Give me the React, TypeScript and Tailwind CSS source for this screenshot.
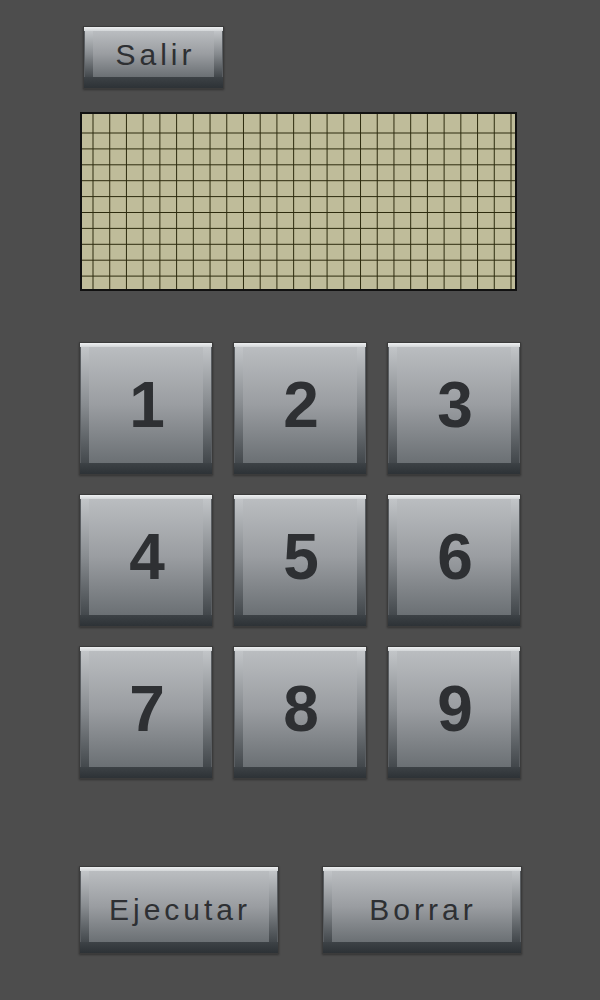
import React from 'react';

const font = { fontFamily: '"Liberation Sans", Arial, sans-serif' };

type BtnProps = {
  label: string;
  className: string;
  textClass: string;
};

// bevelled grey key: light strip on top, darker side bevels, dark strip at the bottom
const BevelButton = ({ label, className, textClass }: BtnProps) => {
  return (
    <button
      className={`flex flex-col border border-[#3b3b3b] shadow-[0_1px_2px_rgba(0,0,0,0.35)] ${className}`}
      style={font}
    >
      <div className="h-[4px] w-full shrink-0 bg-gradient-to-b from-[#eef0f1] to-[#d2d5d7]" />
      <div className="flex flex-1 w-full">
        <div className="w-[9px] shrink-0 bg-gradient-to-b from-[#c2c5c8] via-[#888c90] to-[#44494d] border-l border-[#5a5e62]" />
        <div
          className={`flex flex-1 items-center justify-center bg-gradient-to-b from-[#babdc0] via-[#9a9da1] to-[#6b7074] text-[#2e3033] ${textClass}`}
        >
          {label}
        </div>
        <div className="w-[9px] shrink-0 bg-gradient-to-b from-[#c2c5c8] via-[#868a8e] to-[#42474b] border-r border-[#5a5e62]" />
      </div>
      <div className="h-[11px] w-full shrink-0 bg-gradient-to-b from-[#3d4246] to-[#2d3236]" />
    </button>
  );
};

const GridDisplay = () => {
  const cols = Array.from({ length: 26 }, (_, i) => 11 + i * 16.72);
  const rows = Array.from({ length: 10 }, (_, j) => 19 + j * 15.9);
  return (
    <div className="ml-[80px] mt-[23px] h-[179px] w-[437px] border-2 border-[#111111] bg-[#bfbc9a]">
      <svg width="433" height="175" className="block">
        {cols.map((x) => (
          <line key={`c${x}`} x1={x} y1={0} x2={x} y2={175} stroke="#2d2b0e" strokeWidth={1} />
        ))}
        {rows.map((y) => (
          <line key={`r${y}`} x1={0} y1={y} x2={433} y2={y} stroke="#2d2b0e" strokeWidth={1} />
        ))}
      </svg>
    </div>
  );
};

const App = () => {
  const keys = ['1', '2', '3', '4', '5', '6', '7', '8', '9'];
  return (
    <div className="flex h-[1000px] w-[600px] flex-col bg-[#4d4d4d] pt-[26px]">
      <BevelButton
        label="Salir"
        className="ml-[83px] h-[63px] w-[141px]"
        textClass="text-[30px] tracking-[4px] pl-[4px] pt-[1px]"
      />

      <GridDisplay />

      <div className="ml-[79px] mt-[51px] grid w-[442px] grid-cols-[134px_134px_134px] gap-x-[20px] gap-y-[19px]">
        {keys.map((k) => (
          <BevelButton key={k} label={k} className="h-[133px] w-[134px]" textClass="text-[64px] font-bold pl-[2px]" />
        ))}
      </div>

      <div className="ml-[79px] mt-[87px] flex gap-[43px]">
        <BevelButton
          label="Ejecutar"
          className="h-[88px] w-[200px]"
          textClass="text-[30px] tracking-[4px] pl-[2px] pt-[5px]"
        />
        <BevelButton
          label="Borrar"
          className="h-[88px] w-[200px]"
          textClass="text-[30px] tracking-[4px] pl-[2px] pt-[5px]"
        />
      </div>
    </div>
  );
};

export default App;
